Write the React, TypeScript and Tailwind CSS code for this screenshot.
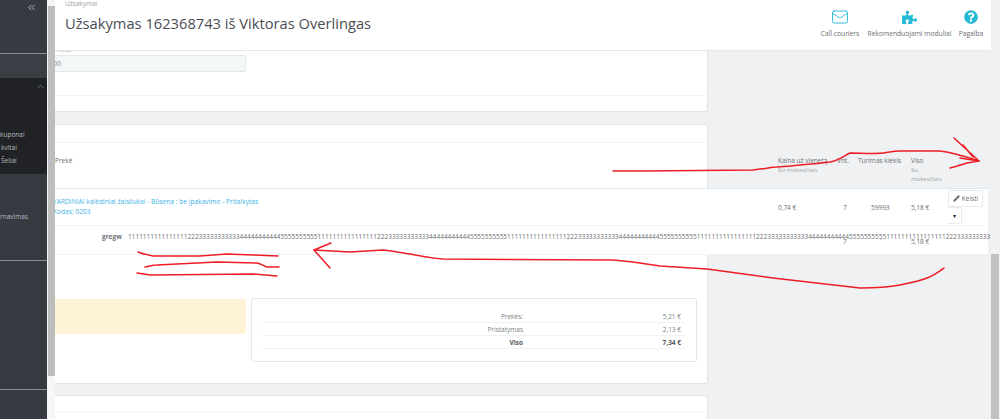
import { ChevronUp, ChevronsLeft, Mail, Pencil } from 'lucide-react'
import { FaPuzzlePiece, FaQuestionCircle } from 'react-icons/fa'

const period = '1111111111111111222333333333334444444444455555555555'.slice(0, 51)
const digits = period.repeat(4) + period.slice(0, 28)

function Sidebar() {
  return (
    <aside className="flex w-[47px] shrink-0 flex-col overflow-hidden whitespace-nowrap bg-[#363a41] text-[6.5px] text-[#b8babd]">
      <div className="flex h-[54px] shrink-0 justify-end border-b border-[#8a8d91] pr-[10px] pt-[2px]">
        <ChevronsLeft size={11} strokeWidth={2} className="text-[#b9bcc0]" />
      </div>
      <div className="h-[24px] shrink-0 bg-[#3a3e45]" />
      <div className="h-[96px] shrink-0 bg-[#202226]">
        <div className="flex h-[50px] justify-end pr-[2px] pt-[4px]">
          <ChevronUp size={9} className="text-[#6f8a90]" />
        </div>
        <div className="flex h-[13px] items-center">kuponai</div>
        <div className="flex h-[13px] items-center pl-[1px]">kvitai</div>
        <div className="flex h-[13px] items-center pl-[1px]">Šeliai</div>
      </div>
      <div className="flex h-[86px] shrink-0 items-center">rnavimas</div>
      <div className="h-[129px] shrink-0 border-t border-[#8a8d91]" />
      <div className="flex-1 border-t border-[#8a8d91]" />
    </aside>
  )
}

function Action({ icon, label, className }: { icon: React.ReactNode; label: string; className: string }) {
  return (
    <div className={`flex flex-col items-center ${className}`}>
      <div className="flex h-[18px] items-center">{icon}</div>
      <span className="mt-[3px] whitespace-nowrap">{label}</span>
    </div>
  )
}

function TotalRow({ label, value, bold }: { label: string; value: string; bold?: boolean }) {
  return (
    <div className={`flex h-[13px] items-center border-b border-[#eff1f2] pt-[2px] text-[6.5px] ${bold ? 'font-bold text-[#555]' : 'text-[#7c7f83]'}`}>
      <span className="w-[260px] text-right">{label}</span>
      <span className="flex-1 pr-[4px] text-right">{value}</span>
    </div>
  )
}

export default function App() {
  return (
    <div className="relative flex h-[419px] w-[1000px] overflow-hidden bg-[#eff1f2] font-['Open_Sans',sans-serif] text-[#6c6f73]">
      <Sidebar />
      <div className="w-[8px] shrink-0 bg-[#f6f6f6] pt-[6px] pl-[1px]">
        <div className="h-[370px] w-[7px] bg-[#bdbdbd]" />
      </div>

      <main className="flex min-w-0 flex-1 flex-col">
        <header className="flex h-[51px] w-[936px] shrink-0 items-start justify-between border-b border-[#e6e8ea] bg-white pl-[10px]">
          <div>
            <div className="text-[6.5px] leading-[7px] text-[#a0a3a6]">Užsakymai</div>
            <h1 className="mt-[5px] text-[14.7px] leading-[22px] text-[#4a4e55]">
              Užsakymas 162368743 iš Viktoras Overlingas
            </h1>
          </div>
          <div className="flex pr-[8px] pt-[8px] text-[6.7px] leading-[9px]">
            <Action className="w-[38px]" label="Call couriers" icon={<Mail size={18} strokeWidth={1.2} className="text-[#25b9d7]" />} />
            <Action className="ml-[9px] w-[83px]" label="Rekomenduojami moduliai" icon={<FaPuzzlePiece size={15} className="text-[#25b9d7]" />} />
            <Action className="ml-[8px] w-[24px]" label="Pagalba" icon={<FaQuestionCircle size={14} className="text-[#25b9d7]" />} />
          </div>
        </header>

        <section className="h-[61px] w-[653px] shrink-0 overflow-hidden rounded-br-[3px] border-b border-r border-[#e0e2e4] bg-white">
          <div className="h-[45px] border-b border-[#f4f5f6]">
            <div className="flex h-[4px] items-end overflow-hidden pl-[2px] text-[6px] text-[#8a8d91]">rimai</div>
            <div className="h-[17px] w-[191px] overflow-hidden rounded-r-[2px] border-y border-r border-[#e3e7ea] bg-[#f4f7f8] text-[7px] leading-[15px] text-[#8a8d91]">
              <span className="-ml-[2px] block">00</span>
            </div>
          </div>
        </section>

        <div className="h-[12px] shrink-0" />

        {/* the table is wider than its card and runs out over the page background */}
        <section className="h-[260px] w-[653px] shrink-0 rounded-r-[3px] border-y border-r border-[#e0e2e4] bg-white">
          <div className="h-[18px] border-b border-[#f4f5f6]" />
          <div className="flex h-[45px] w-[933px] text-[6.5px] leading-[9px]">
            <div className="w-[723px] shrink-0 pt-[13px]">Prekė</div>
            <div className="w-[59px] shrink-0 pt-[13px]">
              Kaina už vienetą
              <div className="mt-[1px] text-[6px] text-[#a0a3a6]">Su mokesčiais</div>
            </div>
            <div className="w-[21px] shrink-0 pt-[13px]">Vnt.</div>
            <div className="w-[53px] shrink-0 pt-[13px]">Turimas kiekis</div>
            <div className="w-[32px] shrink-0 pt-[13px]">
              Viso
              <div className="mt-[1px] text-[6px] text-[#a0a3a6]">Su mokesčiais</div>
            </div>
          </div>

          <div className="flex h-[38px] w-[933px] border-y border-t-[#dbe9f3] border-b-[#f4f5f6] bg-white text-[6.5px] leading-[10px]">
            <div className="w-[723px] shrink-0 overflow-hidden pt-[8px] text-[6.65px] leading-[9.5px] text-[#3fb3e8]">
              <div className="-ml-[2px]">YARDINIAI kalėdiniai žaisliukai - Būsena : be įpakavimo - Pritaikytas</div>
              <div className="-ml-[2px]">Kodas: 0203</div>
            </div>
            <div className="w-[59px] shrink-0 pt-[14px]">0,74 €</div>
            <div className="w-[21px] shrink-0 pl-[6px] pt-[14px]">7</div>
            <div className="w-[53px] shrink-0 pl-[13px] pt-[14px]">59993</div>
            <div className="w-[37px] shrink-0 pt-[14px]">5,18 €</div>
            <div className="w-[40px] shrink-0 pt-[1px]">
              <div className="flex h-[17px] w-[35px] items-center justify-center gap-[2px] border border-[#e9ebed] bg-white">
                <Pencil size={7} fill="currentColor" />
                Keisti
              </div>
              <div className="flex h-[17px] w-[14px] items-center justify-center border-y border-r border-[#e9ebed] bg-white text-[6px] text-[#222]">▾</div>
            </div>
          </div>

          <div className="flex h-[29px] w-[933px] border-b border-[#eff1f2] bg-white text-[6.5px] leading-[10px]">
            <div className="flex w-[723px] shrink-0 pl-[47px] pt-[6px]">
              <span className="w-[26px] shrink-0 font-bold">gregw</span>
              <span className="whitespace-nowrap">{digits}</span>
            </div>
            <div className="w-[59px] shrink-0 pt-[9px]">·</div>
            <div className="w-[21px] shrink-0 pl-[6px] pt-[11px]">7</div>
            <div className="w-[53px] shrink-0 pl-[22px] pt-[9px]">·</div>
            <div className="w-[37px] shrink-0 pt-[11px]">5,18 €</div>
          </div>

          <div className="flex items-start pt-[44px]">
            <div className="h-[35px] w-[191px] shrink-0 rounded-r-[2px] bg-[#fff3d7]" />
            <div className="ml-[5px] -mt-[1px] h-[64px] w-[446px] shrink-0 rounded-[3px] border border-[#e3e7ea] bg-white px-[11px] pt-[11px]">
              <TotalRow label="Prekės:" value="5,21 €" />
              <TotalRow label="Pristatymas" value="2,13 €" />
              <TotalRow label="Viso" value="7,34 €" bold />
            </div>
          </div>
        </section>

        <div className="h-[11px] shrink-0" />
        <section className="flex-1 w-[653px] rounded-tr-[3px] border-t border-r border-[#e0e2e4] bg-white">
          <div className="h-[17px] border-b border-[#f4f5f6]" />
        </section>
      </main>

      <div className="w-[9px] shrink-0 pt-[254px]">
        <div className="h-[165px] w-[8px] bg-[#c1c1c1]" />
      </div>

      {/* red pen marks drawn over the screenshot */}
      <svg className="pointer-events-none absolute inset-0" width="1000" height="419" fill="none" stroke="#ee1c25" strokeWidth="1.5" strokeLinecap="round" strokeLinejoin="round">
        <path d="M613 171C625 171 635 171 643 171L753 170C765 169 770 167 777 167C800 165 815 164 830 162C840 160 845 155 850 153C860 153 875 154 883 153C890 152 895 151 900 151L940 151C950 152 955 154 963 156L979 161" />
        <path d="M954 138L979 161M963 145L973 157M979 161L960 158M950 168C955 167 960 165 967 163L979 161" />
        <path d="M138 252C143 254 148 255 153 256L200 256L227 254L253 255L278 256" />
        <path d="M145 267C150 266 153 265 157 265L217 262L257 263C262 264 264 266 267 267L279 267" />
        <path d="M137 273L150 275L253 274L277 276" />
        <path d="M331 243L314 250L330 268" />
        <path d="M314 250L350 252L383 250C395 251 402 253 410 254C420 256 430 258 443 259L613 260L633 262L660 266L707 269L773 278L860 288C875 288 890 287 900 285C910 283 920 281 927 278C935 275 940 271 944 268" />
      </svg>
    </div>
  )
}
